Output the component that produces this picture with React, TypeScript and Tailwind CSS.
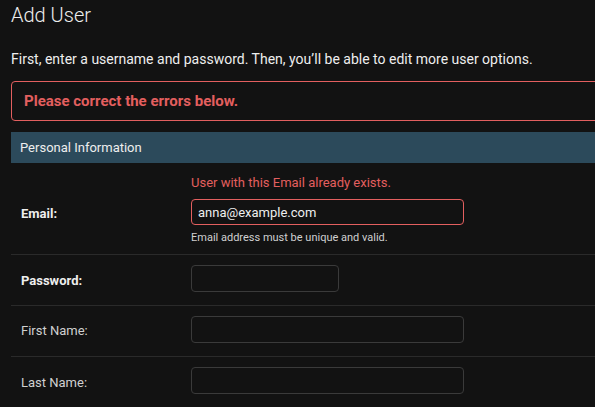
export default function App() {
  return (
    <div className="min-h-screen bg-[#121212] text-[#eeeeee] pl-[11px] overflow-hidden font-['Roboto','Liberation_Sans',sans-serif]">
      {/* Title */}
      <h1 className="pt-[3px] text-[20px] leading-[24px] font-light">Add User</h1>
      <p className="mt-[22px] text-[14px] leading-[20px] whitespace-nowrap">
        First, enter a username and password. Then, you’ll be able to edit more user options.
      </p>

      {/* Error note */}
      <div className="mt-[12px] h-[40px] w-[600px] border border-[#e35f5f] rounded-[4px] flex items-center pl-[12px]">
        <span className="text-[15px] font-bold text-[#e35f5f]">Please correct the errors below.</span>
      </div>

      {/* Fieldset */}
      <div className="mt-[11px] w-[600px]">
        <div className="h-[31px] bg-[#2c4a5b] flex items-center pl-[9px] text-[13px]">
          Personal Information
        </div>

        {/* Email */}
        <div className="flex h-[92px] border-b border-[#2a2a2a]">
          <label className="w-[180px] pl-[10px] pt-[43px] text-[13px] leading-[16px] font-bold text-[#eeeeee]">
            Email:
          </label>
          <div className="pt-[12px]">
            <div className="text-[13px] leading-[16px] text-[#e35f5f]">User with this Email already exists.</div>
            <input
              defaultValue="anna@example.com"
              className="mt-[8px] block w-[273px] h-[26px] rounded-[4px] border border-[#e35f5f] bg-[#121212] px-[6px] text-[13px] text-[#eeeeee] outline-none"
            />
            <div className="mt-[6px] text-[11px] leading-[14px] text-[#d0d0d0]">
              Email address must be unique and valid.
            </div>
          </div>
        </div>

        {/* Password */}
        <div className="flex h-[51px] border-b border-[#2a2a2a]">
          <label className="w-[180px] pl-[10px] pt-[18px] text-[13px] leading-[16px] font-bold text-[#eeeeee]">
            Password:
          </label>
          <div className="pt-[10px]">
            <input
              type="password"
              className="block w-[148px] h-[27px] rounded-[4px] border border-[#3a3a3a] bg-[#121212] outline-none"
            />
          </div>
        </div>

        {/* First Name */}
        <div className="flex h-[51px] border-b border-[#2a2a2a]">
          <label className="w-[180px] pl-[10px] pt-[17px] text-[13px] leading-[16px] text-[#d0d0d0]">
            First Name:
          </label>
          <div className="pt-[10px]">
            <input className="block w-[273px] h-[27px] rounded-[4px] border border-[#3a3a3a] bg-[#121212] outline-none" />
          </div>
        </div>

        {/* Last Name */}
        <div className="flex h-[51px]">
          <label className="w-[180px] pl-[10px] pt-[18px] text-[13px] leading-[16px] text-[#d0d0d0]">
            Last Name:
          </label>
          <div className="pt-[10px]">
            <input className="block w-[273px] h-[27px] rounded-[4px] border border-[#3a3a3a] bg-[#121212] outline-none" />
          </div>
        </div>
      </div>
    </div>
  );
}
